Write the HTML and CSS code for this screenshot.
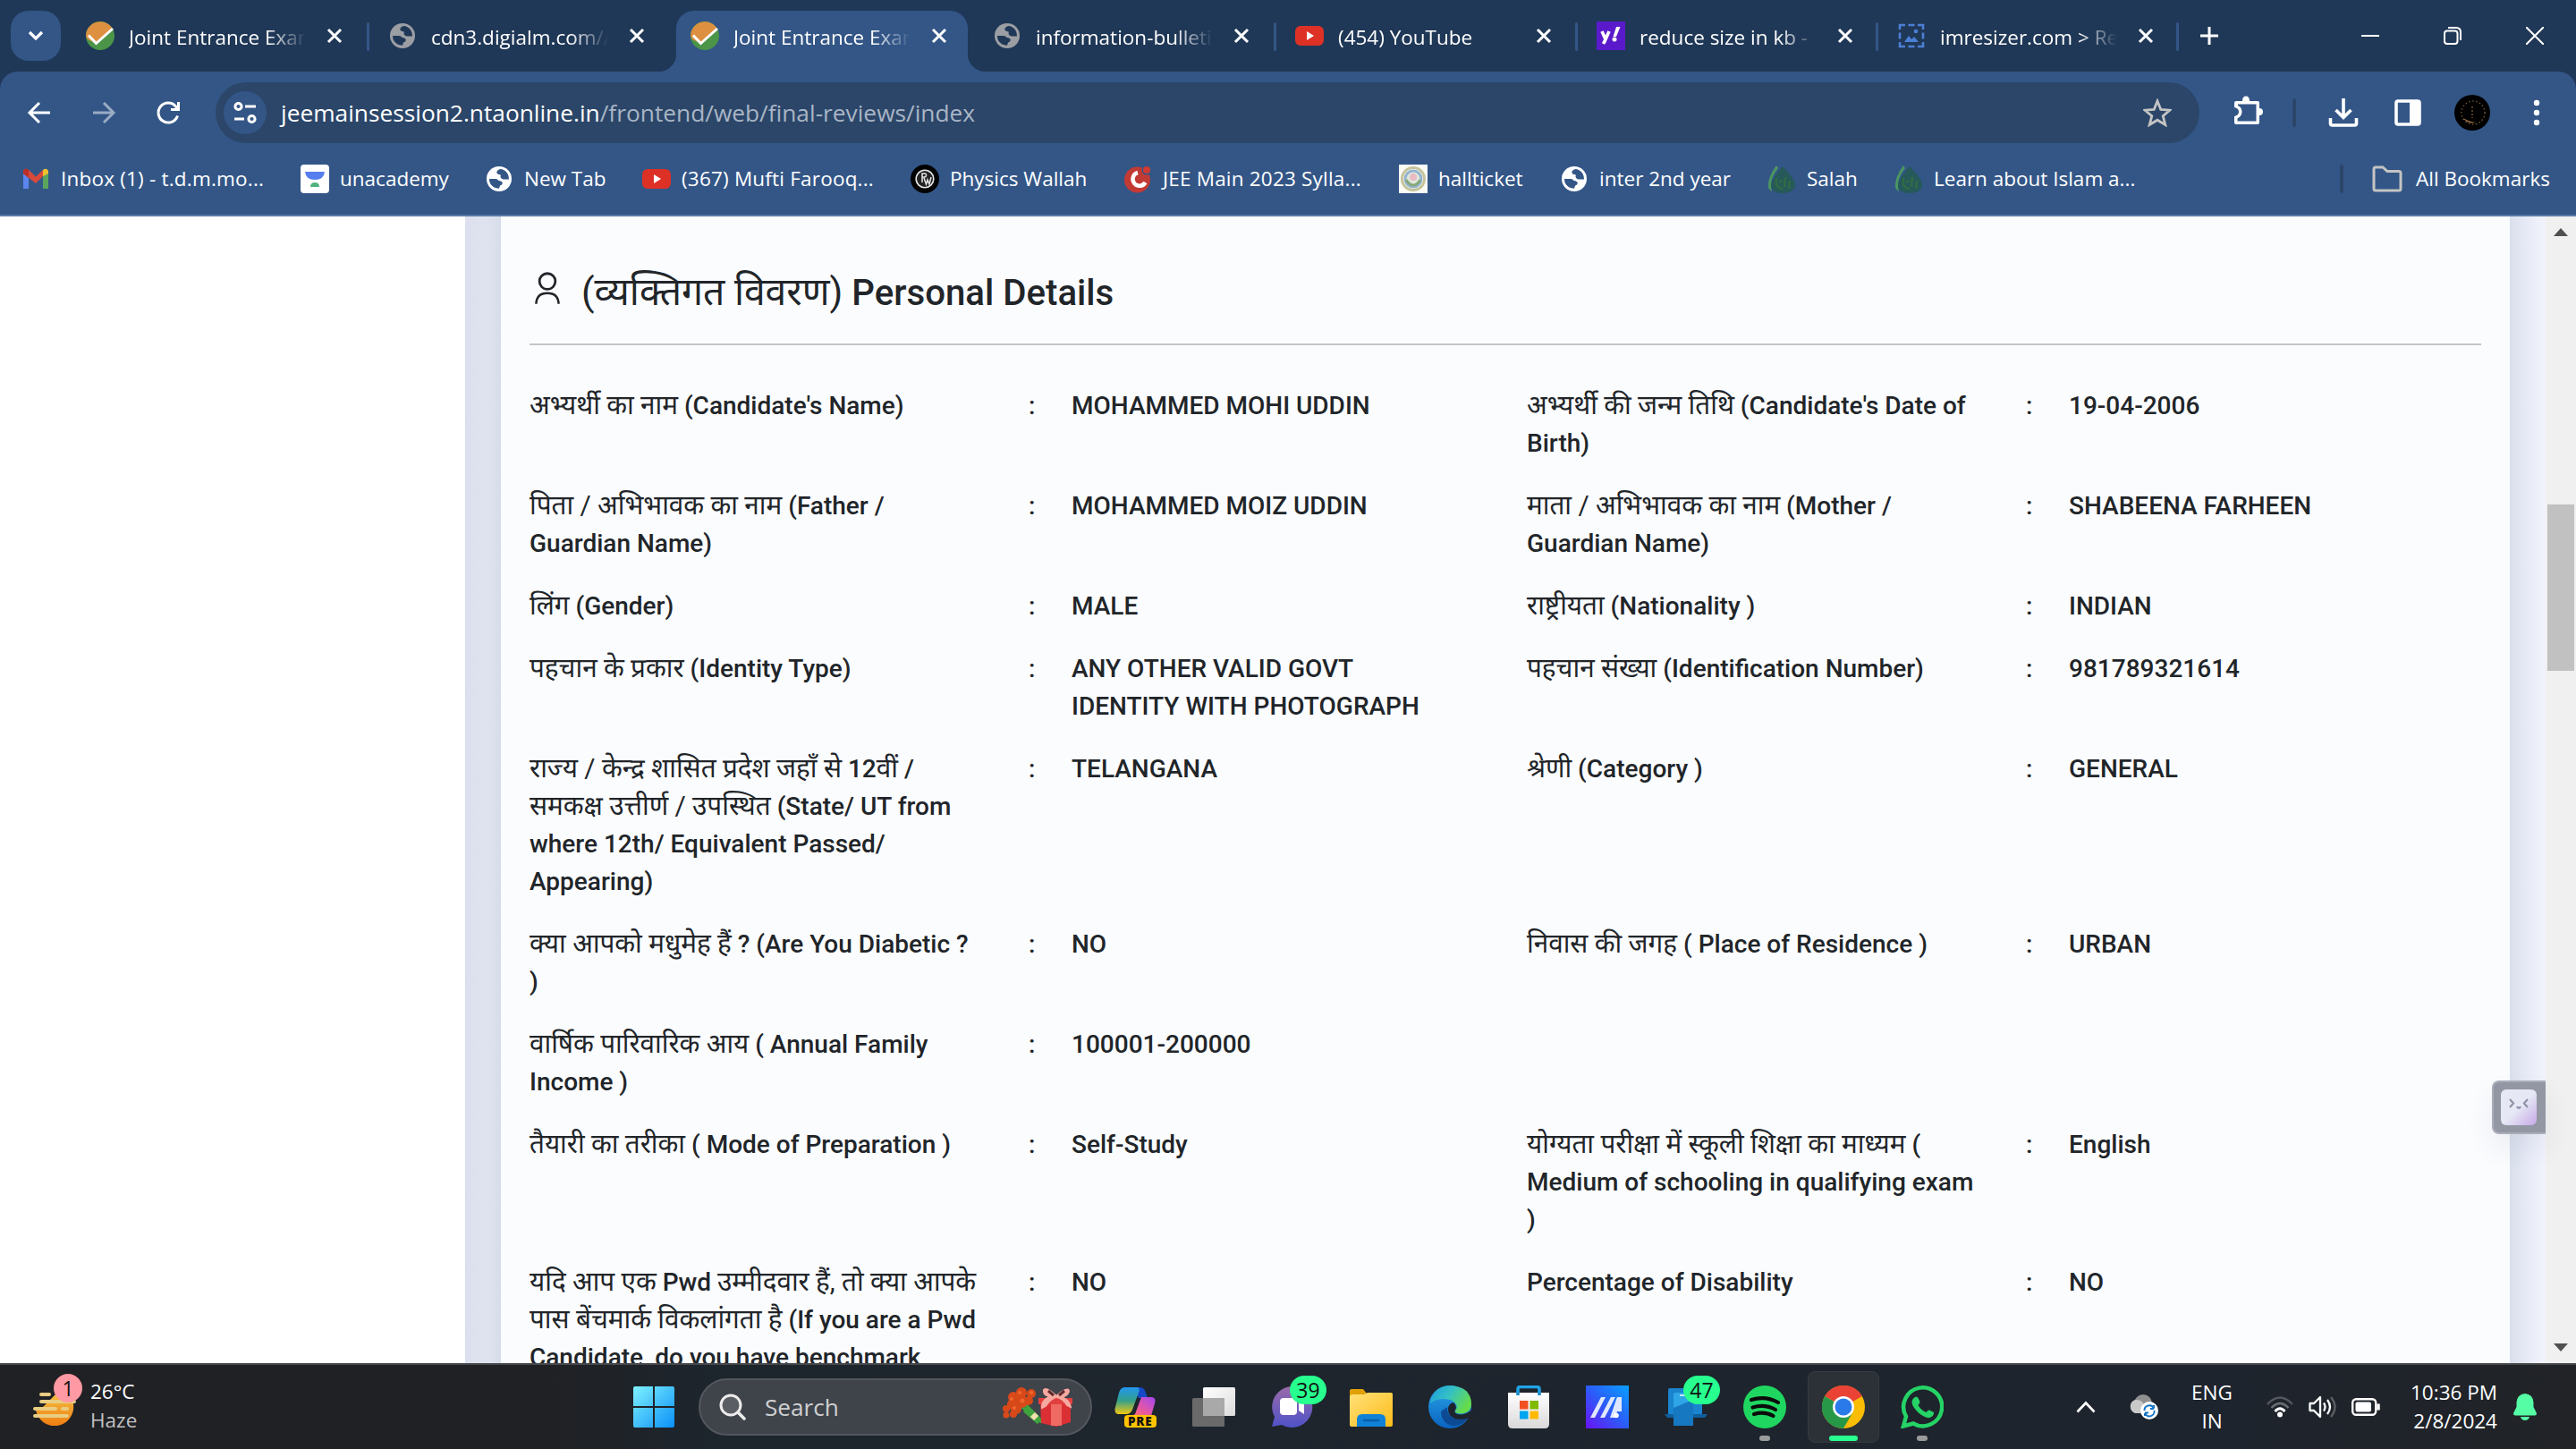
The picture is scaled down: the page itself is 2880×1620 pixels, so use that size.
FILE: index.html
```html
<!DOCTYPE html>
<html lang="en">
<head>
<meta charset="utf-8">
<title>Joint Entrance Examination</title>
<link rel="stylesheet" href="styles.css">
</head>
<body>
<svg class="defs" width="0" height="0">
  <defs>
    <linearGradient id="gWin" x1="0" y1="0" x2="1" y2="1"><stop offset="0" stop-color="#7ff2ff"/><stop offset="1" stop-color="#0a90f8"/></linearGradient>
    <linearGradient id="gSun" x1="0" y1="0" x2="0" y2="1"><stop offset="0" stop-color="#f6c344"/><stop offset="1" stop-color="#ee7d12"/></linearGradient>
    <linearGradient id="gCopA" x1="0" y1="0" x2="0" y2="1"><stop offset="0" stop-color="#2196f0"/><stop offset=".5" stop-color="#35a08a"/><stop offset="1" stop-color="#f2c811"/></linearGradient>
    <linearGradient id="gCopB" x1="1" y1="0" x2="0" y2="1"><stop offset="0" stop-color="#a348f0"/><stop offset=".5" stop-color="#e858a0"/><stop offset="1" stop-color="#ff8a50"/></linearGradient>
    <linearGradient id="gChat" x1="0" y1="0" x2="0" y2="1"><stop offset="0" stop-color="#9a6aa8"/><stop offset="1" stop-color="#4f52c8"/></linearGradient>
    <linearGradient id="gFold" x1="0" y1="0" x2="1" y2="1"><stop offset="0" stop-color="#ffe17a"/><stop offset="1" stop-color="#fcbc19"/></linearGradient>
    <linearGradient id="gEdgeA" x1="0" y1="0" x2="1" y2=".5"><stop offset="0" stop-color="#1b9de2"/><stop offset=".5" stop-color="#35c1c4"/><stop offset="1" stop-color="#65dc4c"/></linearGradient>
    <linearGradient id="gEdgeB" x1="0" y1="0" x2="0" y2="1"><stop offset="0" stop-color="#2aa5e8"/><stop offset="1" stop-color="#0a63c0"/></linearGradient>
    <linearGradient id="gAsus" x1="1" y1="0" x2="0" y2="1"><stop offset="0" stop-color="#0aa0ff"/><stop offset=".5" stop-color="#2b5df8"/><stop offset="1" stop-color="#6a12f5"/></linearGradient>
    <linearGradient id="gBag" x1="0" y1="0" x2="0" y2="1"><stop offset="0" stop-color="#ffffff"/><stop offset="1" stop-color="#d9d9d9"/></linearGradient>
    <linearGradient id="gPanel" x1="0" y1="0" x2="1" y2="1"><stop offset="0" stop-color="#ffffff"/><stop offset="1" stop-color="#dcdcdc"/></linearGradient>
    <linearGradient id="gFace" x1="0" y1="0" x2="1" y2="1"><stop offset=".5" stop-color="#e6e9f5"/><stop offset="1" stop-color="#c7a8e8"/></linearGradient>
  </defs>
  <symbol id="globe" viewBox="0 0 32 32">
    <circle cx="16" cy="16" r="14" fill="currentColor"/>
    <path d="M17.500 5 Q12.500 6.500 13.500 9.500 Q14.500 11.500 17.500 11.200 Q18 12.500 17.500 14 Q19 17 22 16.500 L27 16.500 Q27 9 21 6 Q19.500 5.200 17.500 5z M5 16 L12 16 Q14.500 16.200 15.500 18 Q19.500 18.500 19.800 20.500 Q19.800 22.800 17 23.500 L16 26.800 Q9 26.500 6 21 Q5 18.500 5 16z" class="globe-sea"/>
  </symbol>
  <symbol id="nta" viewBox="0 0 32 32">
    <circle cx="16" cy="16" r="16" fill="#4b9448"/>
    <path d="M0 16 A16 16 0 0 1 30 8.500 L12 25 L2 20 A16 16 0 0 1 0 16z" fill="#dc9040"/>
    <path d="M3 15.500 L11.500 24.500 L30 8" fill="none" stroke="#fff" stroke-width="3"/>
  </symbol>
  <symbol id="close" viewBox="0 0 20 20"><path d="M3 3 L17 17 M17 3 L3 17" stroke="#fff" stroke-width="3" fill="none"/></symbol>
  <symbol id="yt" viewBox="0 0 32 32"><rect x="0" y="5" width="32" height="22" rx="6" fill="#dd3126"/><path d="M13 11 L21 16 L13 21z" fill="#fff"/></symbol>
  <symbol id="leaf" viewBox="0 0 32 32"><path d="M10 1 Q0 14 1 26 Q3 29 5 30 Q1 18 12 4z" fill="#4c9660"/><path d="M17 2 Q33 18 31 25 Q28 32 17 32 Q5 32 4 24 Q4 17 17 2z" fill="#26595a"/><path d="M10 15 Q8 26 17 27 M20 14 L19 25 M25 18 L24 27 M13 20 L17 18" stroke="#2f6b45" stroke-width="2.500" fill="none"/></symbol>
</svg>

<header class="tabstrip">
  <button class="tab-search"><svg width="20" height="20" viewBox="0 0 20 20"><path d="M3 6 L10 13 L17 6" fill="none" stroke="#fff" stroke-width="3.200"/></svg></button>
  <div class="tab sep"><svg class="fav"><use href="#nta"/></svg><span class="tab-title">Joint Entrance Exam</span><svg class="x"><use href="#close"/></svg></div>
  <div class="tab"><svg class="fav gray"><use href="#globe"/></svg><span class="tab-title">cdn3.digialm.com//</span><svg class="x"><use href="#close"/></svg></div>
  <div class="tab active"><svg class="fav"><use href="#nta"/></svg><span class="tab-title">Joint Entrance Exam</span><svg class="x"><use href="#close"/></svg></div>
  <div class="tab sep"><svg class="fav gray"><use href="#globe"/></svg><span class="tab-title">information-bulleti</span><svg class="x"><use href="#close"/></svg></div>
  <div class="tab sep tab-yt"><svg class="fav"><use href="#yt"/></svg><span class="tab-title">(454) YouTube</span><svg class="x"><use href="#close"/></svg></div>
  <div class="tab sep tab-mail"><svg class="fav" viewBox="0 0 32 32"><rect width="32" height="32" fill="#5a1acb"/><path d="M6 11 L10 20 L14 11 M10 20 L7.500 25" stroke="#fff" stroke-width="3.600" fill="none"/><path d="M22 6 L26.500 6 L22 17 L18.500 17z" fill="#fff"/><circle cx="20" cy="20" r="2.500" fill="#fff"/></svg><span class="tab-title">reduce size in kb -</span><svg class="x"><use href="#close"/></svg></div>
  <div class="tab sep last"><svg class="fav" viewBox="0 0 32 32"><path d="M3 9 V4 H9 M12.500 4 H19.500 M23 4 H29 V9 M29 12.500 V19.500 M29 23 V28 H23 M19.500 28 H12.500 M9 28 H3 V23 M3 19.500 V12.500" fill="none" stroke="#4b7fd6" stroke-width="2.600"/><path d="M8 23 L13 16 L16 20 L19 17 L24 23z" fill="#4b7fd6"/><circle cx="21" cy="11" r="2.300" fill="#4b7fd6"/></svg><span class="tab-title">imresizer.com &gt; Re</span><svg class="x"><use href="#close"/></svg></div>
  <svg class="newtab" viewBox="0 0 20 20"><path d="M10 0 V20 M0 10 H20" stroke="#fff" stroke-width="3"/></svg>
  <div class="winctl">
    <svg viewBox="0 0 20 20"><path d="M0 10 H20" stroke="#fff" stroke-width="2"/></svg>
    <svg viewBox="0 0 20 20"><rect x="1" y="4.500" width="14.500" height="14.500" rx="3" fill="none" stroke="#fff" stroke-width="2"/><path d="M5 1 H14 Q19 1 19 6 V15" fill="none" stroke="#fff" stroke-width="2"/></svg>
    <svg viewBox="0 0 20 20"><path d="M0 0 L20 20 M20 0 L0 20" stroke="#fff" stroke-width="2"/></svg>
  </div>
</header>

<div class="chrome">
  <nav class="toolbar">
    <div class="nav">
      <svg viewBox="0 0 28 28"><path d="M26 14 H4 M14 3 L3 14 L14 25" fill="none" stroke="#fff" stroke-width="3"/></svg>
      <svg class="dim" viewBox="0 0 28 28"><path d="M2 14 H24 M14 3 L25 14 L14 25" fill="none" stroke="#fff" stroke-width="3"/></svg>
      <svg viewBox="0 0 28 28"><path d="M24.500 17.500 A11 11 0 1 1 22.500 7 L25 9.800 M25.500 2 V10.500 H17" fill="none" stroke="#fff" stroke-width="3"/></svg>
    </div>
    <div class="omnibox">
      <span class="siteinfo"><svg width="26" height="26" viewBox="0 0 26 26" fill="none" stroke="#fff" stroke-width="3"><circle cx="5.500" cy="6" r="3.600"/><path d="M13 6 H25 M1 20 H12"/><circle cx="20.500" cy="20" r="3.600"/></svg></span>
      <span class="url"><b>jeemainsession2.ntaonline.in</b>/frontend/web/final-reviews/index</span>
      <svg class="star" viewBox="0 0 32 32"><path d="M16 3 L19.800 12.500 L30 13.200 L22.200 19.700 L24.800 29.500 L16 24.200 L7.200 29.500 L9.800 19.700 L2 13.200 L12.200 12.500z" fill="none" stroke="#c4c4c4" stroke-width="2.800"/></svg>
    </div>
    <div class="actions">
      <svg class="ext" viewBox="0 0 36 36"><path d="M5 7 H12 Q12 1.500 16 1.500 Q20 1.500 20 7 H29 Q31 7 31 9 V15 Q35 15 35 19 Q35 23 31 23 V31 Q31 33 29 33 H5 Q3 33 3 31 V24 Q8 23 8 19 Q8 15 3 14 V9 Q3 7 5 7z M7 10.500 V12 Q11.500 14 11.500 19 Q11.500 24 6.500 26.500 V29.500 H27.500 V10.500z" fill="#fff" fill-rule="evenodd"/></svg>
      <i class="divider"></i>
      <svg class="dl" viewBox="0 0 36 36"><path d="M18 2 V23 M9.500 15 L18 23.500 L26.500 15 M3.500 24 V30 Q3.500 32 5.500 32 H30.500 Q32.500 32 32.500 30 V24" fill="none" stroke="#fff" stroke-width="3.600"/></svg>
      <svg class="sp" viewBox="0 0 30 30"><rect x="2" y="2" width="26" height="26" rx="2" fill="none" stroke="#fff" stroke-width="3.600"/><rect x="17" y="2" width="11" height="26" fill="#fff"/></svg>
      <svg class="avatar" viewBox="0 0 40 40"><circle cx="20" cy="20" r="20" fill="#000"/><circle cx="21" cy="20" r="13" fill="none" stroke="#6b4f32" stroke-width="1.500" stroke-dasharray="1.500 2.500"/><path d="M10 26 Q14 33 24 31 Q16 30 10 26z" fill="#9a7048"/><path d="M20 13 V26" stroke="#6b4f32" stroke-width="1.500" stroke-dasharray="2 2"/></svg>
      <svg class="kebab" viewBox="0 0 8 32"><circle cx="4" cy="5" r="3.200" fill="#fff"/><circle cx="4" cy="16" r="3.200" fill="#fff"/><circle cx="4" cy="27" r="3.200" fill="#fff"/></svg>
    </div>
  </nav>
  <nav class="bookmarks">
    <a class="bm bm-inbox"><svg class="fav" viewBox="0 0 32 32"><path d="M2 27 V9 L8 12 V27z" fill="#5b86ee"/><path d="M24 27 V12 L30 9 V27z" fill="#5aa45c"/><path d="M2 10 V7 Q4 3 8 6 L16 13.500 L24 6 V13 L16 21 L6 13z" fill="#d9493a"/><path d="M24 13 V6 Q28 3 30 7 V10z" fill="#f2c02f"/><path d="M2 10 V7 Q4 3 8 6 V15z" fill="#b92f27"/></svg><span>Inbox (1) - t.d.m.mo...</span></a>
    <a class="bm bm-una"><svg class="fav" viewBox="0 0 32 32"><rect width="32" height="32" rx="4" fill="#fff"/><path d="M5 8 H27 Q26 17 16 17 Q6 17 5 8z" fill="#567eee"/><path d="M11 25 Q11 20 16 20 Q21 20 21 25z" fill="#4fb37e"/></svg><span>unacademy</span></a>
    <a class="bm bm-new"><svg class="fav white"><use href="#globe"/></svg><span>New Tab</span></a>
    <a class="bm bm-mufti"><svg class="fav"><use href="#yt"/></svg><span>(367) Mufti Farooq...</span></a>
    <a class="bm bm-pw"><svg class="fav" viewBox="0 0 32 32"><circle cx="16" cy="16" r="16" fill="#000"/><circle cx="16" cy="16" r="9.800" fill="#222" stroke="#e8e8e8" stroke-width="1.600"/><path d="M13 20 V10 H16 Q18.500 10.500 17 13.500 L13 14.500 M15 15 L17.500 22 L19 17 L21 22 L23 14" fill="none" stroke="#ddd" stroke-width="1.600"/></svg><span>Physics Wallah</span></a>
    <a class="bm bm-jee"><svg class="fav" viewBox="0 0 32 32"><circle cx="15.500" cy="17" r="14.500" fill="#c23a34"/><path d="M16 9 A7.500 7.500 0 1 0 24.500 20" fill="none" stroke="#fff" stroke-width="4.500"/><circle cx="26" cy="6" r="5.500" fill="#335687"/><circle cx="26" cy="6" r="4" fill="#d23a34"/></svg><span>JEE Main 2023 Sylla...</span></a>
    <a class="bm bm-hall"><svg class="fav" viewBox="0 0 32 32"><rect width="32" height="32" fill="#fbfbf6"/><circle cx="16" cy="16" r="12.500" fill="none" stroke="#c6c49c" stroke-width="3"/><circle cx="16" cy="16" r="9" fill="#dfe6de" stroke="#93b4d0" stroke-width="3"/><path d="M8 17 Q16 29 24 17" fill="none" stroke="#86a878" stroke-width="3"/><circle cx="16" cy="14" r="4" fill="#e8bcc2"/></svg><span>hallticket</span></a>
    <a class="bm bm-inter"><svg class="fav white"><use href="#globe"/></svg><span>inter 2nd year</span></a>
    <a class="bm bm-salah"><svg class="fav"><use href="#leaf"/></svg><span>Salah</span></a>
    <a class="bm bm-learn"><svg class="fav"><use href="#leaf"/></svg><span>Learn about Islam a...</span></a>
    <i class="divider"></i>
    <a class="bm bm-all"><svg class="folder" viewBox="0 0 34 30"><path d="M2 26 V4 Q2 2 4 2 H12 L17 6.500 H30 Q32 6.500 32 8.500 V26 Q32 28 30 28 H4 Q2 28 2 26z" fill="none" stroke="#c4c4c4" stroke-width="3"/></svg><span>All Bookmarks</span></a>
  </nav>
</div>

<main class="page">
  <aside class="side"></aside>
  <div class="gutter-left"></div>
  <section class="card">
    <h2><svg class="user" viewBox="0 0 30 40"><circle cx="15" cy="11" r="9.500" fill="none" stroke="#212529" stroke-width="3"/><path d="M1.500 38 Q2 25 15 25 Q28 25 28.500 38" fill="none" stroke="#212529" stroke-width="2.600"/></svg><span class="title"><span class="hi">(व्यक्तिगत विवरण)</span> Personal Details</span></h2>
    <hr>
    <div class="row"><p class="k"><span class="hi">अभ्यर्थी का नाम</span> (Candidate's Name)</p><p class="c">:</p><p class="v">MOHAMMED MOHI UDDIN</p><p class="k"><span class="hi">अभ्यर्थी की जन्म तिथि</span> (Candidate's Date of<br>Birth)</p><p class="c">:</p><p class="v">19-04-2006</p></div>
    <div class="row"><p class="k"><span class="hi">पिता / अभिभावक का नाम</span> (Father /<br>Guardian Name)</p><p class="c">:</p><p class="v">MOHAMMED MOIZ UDDIN</p><p class="k"><span class="hi">माता / अभिभावक का नाम</span> (Mother /<br>Guardian Name)</p><p class="c">:</p><p class="v">SHABEENA FARHEEN</p></div>
    <div class="row"><p class="k"><span class="hi">लिंग</span> (Gender)</p><p class="c">:</p><p class="v">MALE</p><p class="k"><span class="hi">राष्ट्रीयता</span> (Nationality )</p><p class="c">:</p><p class="v">INDIAN</p></div>
    <div class="row"><p class="k"><span class="hi">पहचान के प्रकार</span> (Identity Type)</p><p class="c">:</p><p class="v">ANY OTHER VALID GOVT<br>IDENTITY WITH PHOTOGRAPH</p><p class="k"><span class="hi">पहचान संख्या</span> (Identification Number)</p><p class="c">:</p><p class="v">981789321614</p></div>
    <div class="row"><p class="k"><span class="hi">राज्य / केन्द्र शासित प्रदेश जहाँ से</span> 12<span class="hi">वीं</span> /<br><span class="hi">समकक्ष उत्तीर्ण / उपस्थित</span> (State/ UT from<br>where 12th/ Equivalent Passed/<br>Appearing)</p><p class="c">:</p><p class="v">TELANGANA</p><p class="k"><span class="hi">श्रेणी</span> (Category )</p><p class="c">:</p><p class="v">GENERAL</p></div>
    <div class="row"><p class="k"><span class="hi">क्या आपको मधुमेह हैं</span> ? (Are You Diabetic ?<br>)</p><p class="c">:</p><p class="v">NO</p><p class="k"><span class="hi">निवास की जगह</span> ( Place of Residence )</p><p class="c">:</p><p class="v">URBAN</p></div>
    <div class="row"><p class="k"><span class="hi">वार्षिक पारिवारिक आय</span> ( Annual Family<br>Income )</p><p class="c">:</p><p class="v">100001-200000</p></div>
    <div class="row"><p class="k"><span class="hi">तैयारी का तरीका</span> ( Mode of Preparation )</p><p class="c">:</p><p class="v">Self-Study</p><p class="k"><span class="hi">योग्यता परीक्षा में स्कूली शिक्षा का माध्यम</span> (<br>Medium of schooling in qualifying exam<br>)</p><p class="c">:</p><p class="v">English</p></div>
    <div class="row"><p class="k"><span class="hi">यदि आप एक</span> Pwd <span class="hi">उम्मीदवार हैं, तो क्या आपके</span><br><span class="hi">पास बेंचमार्क विकलांगता है</span> (If you are a Pwd<br>Candidate, do you have benchmark</p><p class="c">:</p><p class="v">NO</p><p class="k">Percentage of Disability</p><p class="c">:</p><p class="v">NO</p></div>
  </section>
  <div class="gutter-right"></div>
  <div class="scrollbar"><svg viewBox="0 0 16 10"><path d="M0 9 L8 0 L16 9z" fill="#505050"/></svg><i class="thumb"></i><svg viewBox="0 0 16 10"><path d="M0 1 L8 10 L16 1z" fill="#505050"/></svg></div>
  <div class="buddy"><svg viewBox="0 0 40 40"><rect width="40" height="40" rx="6" fill="url(#gFace)"/><path d="M10 11 L14 15.500 L10 20 M30 11 L26 15.500 L30 20 M18 19 Q20 23 22 19" fill="none" stroke="#8f92a8" stroke-width="2.200"/></svg></div>
</main>

<footer class="taskbar">
  <div class="weather">
    <svg class="haze" viewBox="0 0 48 38"><path d="M3 20 A21 21 0 0 0 45 14 Q45 6 40 0 H28 L8 20z" fill="url(#gSun)"/><path d="M9 3 H18 M9 11 H46 M2 19 H25 M33 19 H38 M2 27 H38" stroke="#e8cd82" stroke-width="4" stroke-linecap="round"/></svg>
    <span class="badge pink">1</span>
    <p>26°C<br><span>Haze</span></p>
  </div>
  <svg class="start" viewBox="0 0 46 46"><path d="M2 0 H22 V22 H0 V2 Q0 0 2 0z M24 0 H44 Q46 0 46 2 V22 H24z M0 24 H22 V46 H2 Q0 46 0 44z M24 24 H46 V44 Q46 46 44 46 H24z" fill="url(#gWin)"/></svg>
  <div class="search">
    <svg class="mag" viewBox="0 0 30 30"><circle cx="13" cy="13" r="11" fill="#5a5d63" stroke="#ececec" stroke-width="3"/><path d="M21 21 L28 28" stroke="#ececec" stroke-width="3.600" stroke-linecap="round"/></svg>
    <span>Search</span>
    <svg class="gift" viewBox="0 0 78 44"><path d="M22 22 L44 39 M24 26 L40 40 M26 20 L42 36" stroke="#3fa23c" stroke-width="3.500"/><path d="M33 35 L38 30" stroke="#f0dfae" stroke-width="6"/><g fill="#d8491a"><circle cx="12" cy="11" r="6"/><circle cx="21" cy="6" r="6"/><circle cx="32" cy="7" r="5"/><circle cx="11" cy="19" r="6"/><circle cx="21" cy="16" r="7"/><circle cx="29" cy="15" r="5"/><circle cx="15" cy="24" r="6"/><circle cx="4" cy="24" r="4"/><circle cx="4" cy="31" r="3.500"/><circle cx="12" cy="30" r="4"/></g><g fill="#f0672e"><circle cx="19" cy="6" r="2"/><circle cx="10" cy="13" r="2"/><circle cx="22" cy="15" r="2.500"/><circle cx="32" cy="6" r="2"/><circle cx="13" cy="23" r="2"/></g><path d="M42 14 H76 V39 L60 44 L43 40z" fill="#da3034"/><path d="M54 12 H66 V43 H54z" fill="#ef6a62"/><path d="M40 12 H78 V19 H40z" fill="#e2403f"/><path d="M60 10 Q48 -1 46 3 Q45 11 59 10 Q73 12 74 4 Q73 -1 60 10z M56 9 Q43 14 44 23 L48 21 Q52 14 59 11z M63 10 Q74 13 76 22 L72 20 Q68 13 61 11z" fill="#f5a9a0" stroke="#f5a9a0" stroke-width="2"/><path d="M51 4 L57 9 M69 4 L63 9" stroke="#5c2a2c" stroke-width="3"/></svg>
  </div>
  <div class="app"><svg viewBox="0 0 48 48"><path d="M22 2 H30 Q34 2 36 8 L38 14 H28z" fill="#1549c8"/><path d="M12 2 H27 Q30 3 28 8 L21 27 Q19 32 14 32 H6 Q0 32 2 24 L6 8 Q8 2 12 2z" fill="url(#gCopA)"/><path d="M31 13 H42 Q48 13 46 20 L42 34 Q41 38 36 38 H12 L24 32z" fill="url(#gCopB)"/><rect x="12" y="33" width="36" height="14" rx="4" fill="#ffc400"/></svg><span class="pre">PRE</span></div>
  <div class="app"><svg viewBox="0 0 48 48"><rect x="12" y="2" width="36" height="32" rx="1.500" fill="url(#gPanel)"/><rect x="0" y="14" width="36" height="32" rx="1.500" fill="#6a6a6a"/><rect x="12" y="14" width="24" height="20" fill="#a9a9a9"/></svg></div>
  <div class="app"><svg viewBox="0 0 48 48"><path d="M24 1 A23 23 0 1 1 12 44 L1 46 L4 35 A23 23 0 0 1 24 1z" fill="url(#gChat)"/><rect x="10" y="14" width="19" height="19" rx="4" fill="#fff"/><path d="M31 20 L37 15 V32 L31 28z" fill="#fff"/></svg><span class="badge">39</span></div>
  <div class="app"><svg viewBox="0 0 48 48"><path d="M0 6 Q0 4 2 4 H15 L19 9 H48 V18 H0z" fill="#e0a106"/><path d="M2 10 H16 L20 8 H46 Q48 8 48 10 V44 Q48 46 46 46 H2 Q0 46 0 44 V12z" fill="url(#gFold)"/><path d="M8 46 V38 Q8 32 14 32 H34 Q40 32 40 38 V46z" fill="#0f82d8"/><path d="M16 39 H32" stroke="#0a5ca8" stroke-width="2.500" stroke-linecap="round"/></svg></div>
  <div class="app"><svg viewBox="0 0 48 48"><circle cx="24" cy="24" r="24" fill="url(#gEdgeB)"/><path d="M14 29 Q14 40 24 44.500 Q34 47 42 39 Q44 36 43 35.500 Q36 39 29.500 37 Q20 33 21 24z" fill="#0d4a94"/><path d="M2 20 Q5 1 24 0 Q47 1 48 20 Q48 31 36 31.500 Q29 31 29.500 28.500 Q33 25 31 21 Q27 15 18 15 Q7 15 2 20z" fill="url(#gEdgeA)"/><path d="M29.500 28.500 Q29 32 36 32.500 Q42 32.500 48.500 27 L45.500 36.500 Q36 39 29.500 37 Q21 33 22 25 Q23 20 28 19 Q33 23 29.500 28.500z" fill="#1e242d"/></svg></div>
  <div class="app"><svg viewBox="0 0 48 48"><path d="M12 11 V4 Q12 1.500 15 1.500 H33 Q36 1.500 36 4 V11" fill="none" stroke="#1fa3e6" stroke-width="3.500"/><path d="M1 8 H47 V43 Q47 48 42 48 H6 Q1 48 1 43z" fill="url(#gBag)"/><path d="M12 8 V11 M36 8 V11" stroke="#1689c8" stroke-width="3.500"/><rect x="14" y="17" width="9.500" height="9.500" fill="#f25022"/><rect x="25.500" y="17" width="9.500" height="9.500" fill="#7fba00"/><rect x="14" y="28.500" width="9.500" height="9" fill="#00a4ef"/><rect x="25.500" y="28.500" width="9.500" height="9" fill="#ffb900"/></svg></div>
  <div class="app"><svg viewBox="0 0 48 48"><rect width="48" height="48" fill="url(#gAsus)"/><path d="M5 36 L17 13 H22 L10 36z M16 36 L28 13 H33 L21 36z M35 13 L40 13 V29 H35 L33 36 H27z" fill="#dfe8ff"/><circle cx="34" cy="33.500" r="2.800" fill="#fff"/></svg></div>
  <div class="app"><svg viewBox="0 0 48 48"><rect x="4" y="3" width="38" height="30" rx="2" fill="#1a84cf"/><path d="M0 32 H48 L45 36 H3z" fill="#0f5f9e"/><rect x="10" y="8" width="22" height="37" rx="2" fill="#2ea5e6"/><path d="M10 25 L32 16 V45 H10z" fill="#1678c0"/><path d="M17 11 H25" stroke="#bfe6ff" stroke-width="2"/></svg><span class="badge">47</span></div>
  <div class="app run"><svg viewBox="0 0 48 48"><circle cx="24" cy="24" r="24" fill="#1fd760"/><path d="M9 16 Q25 11 39 19 M10.500 24.500 Q24 20.500 36 27 M12 32 Q24 28.500 33.500 34" fill="none" stroke="#0b0b0b" stroke-width="4.200" stroke-linecap="round"/></svg></div>
  <div class="app on"><svg viewBox="0 0 48 48"><circle cx="24" cy="24" r="24" fill="#fbbc05"/><path d="M24 24 L3.200 12 A24 24 0 0 1 44.800 12z" fill="#ea4335"/><path d="M24 0 A24 24 0 0 1 44.800 12 H24z" fill="#ea4335"/><path d="M3.200 12 A24 24 0 0 0 24 48 L34.400 30 L24 24z" fill="#279847"/><circle cx="24" cy="24" r="12" fill="#fff"/><circle cx="24" cy="24" r="9.500" fill="#2a7be9"/></svg></div>
  <div class="app run"><svg viewBox="0 0 48 48"><path d="M3 45.500 L6 34.500 A21.500 21.500 0 1 1 14 42.500z" fill="#1e242c" stroke="#25d366" stroke-width="4.500"/><path d="M16 13 Q18 11.500 19.500 14 L21.500 18 Q21.500 20 19.500 22 Q23 28 28.500 30 Q30.500 27 32 27.500 L37 30 Q37.500 34 32.500 36 Q28 37 20.500 31 Q13 24 12.500 19 Q12.500 15 16 13z" fill="#25d366"/></svg></div>
  <div class="tray">
    <svg class="t-chev" viewBox="0 0 22 14"><path d="M1.500 12.500 L11 2.500 L20.500 12.500" fill="none" stroke="#fff" stroke-width="2.600"/></svg>
    <svg class="t-cloud" viewBox="0 0 34 30"><circle cx="17" cy="11" r="10" fill="#909090"/><path d="M8 22 A8 8 0 0 1 8 7 Q16 6 18 13 H26 V22z" fill="#c9c9c9"/><circle cx="24" cy="19" r="10" fill="#fff"/><path d="M18.500 19 A5.500 5.500 0 0 1 29 16.500 V13 M29 17 H25 M29.500 19 A5.500 5.500 0 0 1 19 22 V25 M19 21.500 H23" fill="none" stroke="#1672c4" stroke-width="2"/></svg>
    <p class="lang">ENG<br>IN</p>
    <svg class="t-wifi" viewBox="0 0 32 24"><path d="M2 9 Q16 -6 30 9" fill="none" stroke="#54575c" stroke-width="2.500"/><path d="M6.500 13 Q16 3 25.500 13" fill="none" stroke="#6c6f74" stroke-width="2.500"/><path d="M10.500 17 Q16 10.500 21.500 17" fill="none" stroke="#fff" stroke-width="2.800"/><circle cx="16" cy="20.500" r="3" fill="#fff"/></svg>
    <svg class="t-vol" viewBox="0 0 32 26"><path d="M1.500 9 H6 L13 2 V24 L6 17 H1.500z" fill="none" stroke="#fff" stroke-width="2.300" stroke-linejoin="round"/><path d="M17 8.500 Q20 13 17 17.500 M21 5 Q27 13 21 21" fill="none" stroke="#fff" stroke-width="2.300"/><path d="M25 2 Q34 13 25 24" fill="none" stroke="#5c5f64" stroke-width="2.300"/></svg>
    <svg class="t-bat" viewBox="0 0 32 20"><rect x="1.200" y="1.200" width="26" height="17.600" rx="4" fill="none" stroke="#fff" stroke-width="2.400"/><rect x="4.500" y="4.500" width="17.500" height="11" rx="2" fill="#fff"/><path d="M30 6.500 V13.500" stroke="#fff" stroke-width="3.500"/></svg>
    <p class="clock">10:36 PM<br>2/8/2024</p>
    <svg class="t-bell" viewBox="0 0 26 30"><path d="M13 0 Q22 1 22.500 10 V15 L26 22 Q26 24.500 24 24.500 H2 Q0 24.500 0 22 L3.500 15 V10 Q4 1 13 0z M8 26 H18 Q17 30 13 30 Q9 30 8 26z" fill="#55fda4"/></svg>
  </div>
</footer>
</body>
</html>
```
FILE: styles.css
```css
* { box-sizing: border-box; margin: 0; padding: 0; }
body { width: 2880px; height: 1620px; overflow: hidden; display: flex; flex-direction: column; background: #203857; font-family: "Open Sans", "Noto Sans", sans-serif; color: #fff; }
svg { display: block; flex: none; }
.defs { position: absolute; }
.globe-sea { fill: var(--sea, #335687); }

.tabstrip { height: 80px; flex: none; display: flex; align-items: flex-start; padding-left: 12px; background: #203857; }
.tab-search { width: 56px; height: 56px; margin: 12px 8px 0 0; border: 0; border-radius: 20px; background: #335687; display: flex; align-items: center; justify-content: center; }
.tab { width: 338px; height: 68px; margin-top: 12px; padding: 0 0 12px 20px; display: flex; align-items: center; position: relative; }
.tab-yt { width: 337px; }
.tab-mail, .tab.last { width: 336px; }
.fav { width: 32px; height: 32px; }
.fav.gray { color: #9b9ea3; --sea: #203857; }
.fav.white { color: #fff; }
.tab-title { width: 200px; margin: 4px 20px 0 16px; white-space: nowrap; font-size: 22.5px; line-height: 32px; -webkit-mask-image: linear-gradient(90deg, #000 155px, transparent 198px); mask-image: linear-gradient(90deg, #000 155px, transparent 198px); }
.x { width: 20px; height: 20px; }
.tab.sep::after { content: ""; position: absolute; right: 1px; top: 13px; width: 3px; height: 32px; border-radius: 2px; background: #335687; }
.tab.active::before { content: ""; position: absolute; left: 4px; right: 8px; top: 0; bottom: 0; background: #335687; border-radius: 20px 20px 0 0; z-index: 0; }
.tab.active::after { content: ""; position: absolute; left: -16px; right: -12px; bottom: 0; height: 20px; background: radial-gradient(circle at 0 0, transparent 20px, #335687 20.5px) left / 20px 20px no-repeat, radial-gradient(circle at 100% 0, transparent 20px, #335687 20.5px) right / 20px 20px no-repeat; }
.tab.active > * { position: relative; z-index: 1; }
.newtab { width: 20px; height: 20px; margin: 30px 0 0 23px; }
.winctl { margin: 30px 36px 0 auto; display: flex; gap: 72px; }
.winctl svg { width: 20px; height: 20px; }

.chrome { height: 162px; flex: none; background: #335687; border-radius: 20px 20px 0 0; border-bottom: 2px solid #5a7aa5; }
.toolbar { height: 92px; display: flex; align-items: center; padding-left: 30px; }
.nav { display: flex; gap: 44px; width: 211px; }
.nav svg { width: 28px; height: 28px; }
.nav .dim { opacity: .5; }
.omnibox { width: 2218px; height: 68px; border-radius: 34px; background: #2b4669; display: flex; align-items: center; padding: 0 31px 0 9px; }
.siteinfo { width: 48px; height: 48px; border-radius: 50%; background: #335687; display: flex; align-items: center; justify-content: center; margin-right: 16px; }
.url { flex: 1; font-size: 26.300px; line-height: 40px; color: #a9b5c5; white-space: nowrap; }
.url b { font-weight: 400; color: #fff; }
.star { width: 32px; height: 32px; }
.actions { display: flex; align-items: center; flex: 1; padding-left: 36px; }
.ext { width: 36px; height: 36px; margin-right: 32px; margin-top: -4px; }
.divider { width: 4px; height: 32px; border-radius: 2px; background: #2b4669; flex: none; }
.dl { width: 36px; height: 36px; margin-left: 35px; }
.sp { width: 30px; height: 30px; margin-left: 39px; }
.avatar { width: 40px; height: 40px; margin-left: 37px; }
.kebab { width: 8px; height: 32px; margin-left: 48px; }
.bookmarks { height: 56px; display: flex; align-items: center; padding-left: 24px; font-size: 22.500px; line-height: 32px; }
.bm { display: flex; align-items: center; gap: 12px; white-space: nowrap; flex: none; }
.bm-inbox { width: 312px; letter-spacing: .2px; }
.bm-una { width: 206px; }
.bm-new { width: 176px; }
.bm-mufti { width: 300px; letter-spacing: .2px; }
.bm-pw { width: 238px; }
.bm-jee { width: 308px; letter-spacing: .2px; }
.bm-hall { width: 180px; }
.bm-inter { width: 232px; }
.bm-salah { width: 142px; }
.bm-learn { width: 498px; }
.bm-all { margin-left: 32px; gap: 15px; }
.folder { width: 34px; height: 30px; }

.page { height: 1282px; flex: none; display: flex; position: relative; overflow: hidden; }
.side { width: 520px; background: #fff; }
.gutter-left { width: 40px; background: linear-gradient(90deg, #dcdfed, #dfe3ef 60%, #d7dde8); }
.card { width: 2246px; background: #fbfcfe; padding: 0 32px; font-family: Roboto, "Noto Sans Devanagari", sans-serif; font-weight: 500; color: #212529; }
.gutter-right { width: 40px; background: linear-gradient(90deg, #d9dfeb, #e9ecf8 55%, #f1f3fc); }
.card h2 { height: 142px; padding-top: 58px; display: flex; font-size: 40.200px; font-weight: 500; line-height: 56px; white-space: nowrap; }
.user { width: 28px; height: 38px; margin: 4px 24px 0 6px; }
.card hr { border: 0; height: 2px; background: #c3c5c8; margin-bottom: 47px; }
.row { display: grid; grid-template-columns: 558px 48px 509px 558px 48px 400px; margin-bottom: 28px; font-size: 28px; line-height: 42px; white-space: nowrap; }
.hi { font-weight: 400; font-size: 1.06em; line-height: 1; }
.scrollbar { width: 34px; background: #f0f0f0; display: flex; flex-direction: column; align-items: center; padding: 13px 0 13px 0; }
.scrollbar svg { width: 16px; height: 10px; }
.thumb { width: 30px; height: 186px; margin: 299px 0 auto; background: #c1c1c1; }
.buddy { position: absolute; left: 2786px; top: 966px; width: 60px; height: 60px; padding: 8px; border: 2px solid #a9adb9; border-right: 0; border-radius: 8px 0 0 8px; background: #9397a3; box-shadow: 0 16px 30px rgba(60, 70, 110, .08); }
.buddy svg { width: 40px; height: 40px; }

.taskbar { height: 96px; flex: none; display: flex; align-items: center; background: linear-gradient(90deg, #202124 0, #202124 600px, #1d252d 800px, #1e242d 2500px, #212327 2880px); border-top: 2px solid #46484c; }
.weather { width: 708px; height: 94px; position: relative; display: flex; padding: 30px 0 0 37px; }
.haze { width: 48px; height: 38px; }
.weather p { margin: -16px 0 0 16px; font-size: 22.500px; line-height: 32px; }
.weather p span { color: #c0c1c3; }
.badge { position: absolute; height: 32px; width: 41px; border-radius: 16px; background: #27ff8e; color: #111; font-size: 23px; line-height: 32px; text-align: center; }
.badge.pink { left: 60px; top: 10px; width: 32px; background: #ff99a4; }
.start { width: 46px; height: 46px; }
.search { width: 440px; height: 64px; margin: 0 8px 0 27px; border: 2px solid #54575d; border-radius: 32px; background: #3f434a; display: flex; align-items: center; padding: 0 20px 0 21px; font-size: 26.200px; color: #cfd0d2; }
.search span { margin: 0 auto 0 21px; }
.mag { width: 30px; height: 30px; }
.gift { width: 78px; height: 44px; }
.app { width: 80px; height: 80px; margin-right: 8px; padding: 16px; border-radius: 8px; position: relative; flex: none; }
.app > svg { width: 48px; height: 48px; }
.app .badge { left: 37px; top: 5px; }
.app.on { background: #2c3137; border: 1px solid #373b40; padding: 15px; }
.app.run::after, .app.on::after { content: ""; position: absolute; left: 34px; bottom: 2px; width: 12px; height: 6px; border-radius: 3px; background: #9a9b9d; }
.app.on::after { left: 23px; bottom: 1px; width: 32px; background: #27ff8e; }
.pre { position: absolute; left: 32px; top: 48px; font-size: 13.500px; line-height: 16px; font-weight: 800; letter-spacing: .8px; color: #111; }
.tray { flex: 1; display: flex; align-items: center; font-size: 22.500px; line-height: 32px; padding-left: 124px; }
.t-chev { width: 22px; height: 14px; margin-right: 36px; }
.t-cloud { width: 34px; height: 30px; margin-right: 37px; }
.lang { width: 46px; text-align: center; margin-right: 37px; }
.t-wifi { width: 32px; height: 24px; margin-right: 16px; }
.t-vol { width: 32px; height: 26px; margin-right: 16px; }
.t-bat { width: 32px; height: 20px; margin-right: 31px; }
.clock { width: 100px; text-align: right; white-space: nowrap; display: flex; justify-content: flex-end; }
.t-bell { width: 26px; height: 30px; margin-left: 18px; }
```
